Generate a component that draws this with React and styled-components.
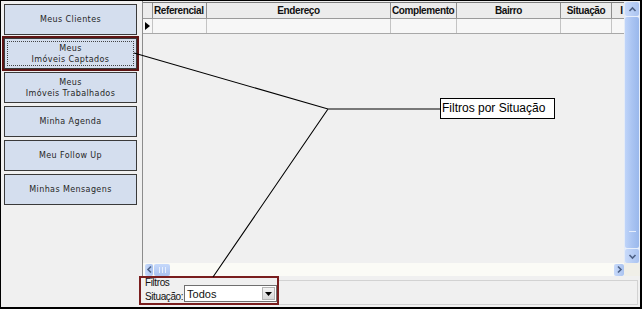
import React from 'react';
import styled, { createGlobalStyle } from 'styled-components';

const GlobalStyle = createGlobalStyle`
  body {
    margin: 0;
    background: #ffffff;
  }
`;

const Frame = styled.div`
  position: relative;
  width: 642px;
  height: 309px;
  box-sizing: border-box;
  border: 1px solid #000;
  border-right-width: 2px;
  border-bottom-width: 2px;
  background: #f0f0f0;
  display: flex;
  overflow: hidden;
  font-family: 'Liberation Sans', Arial, sans-serif;
`;

const SideMenu = styled.div`
  width: 138px;
  flex: none;
  box-sizing: border-box;
  padding: 3px 0 0 3px;
  display: flex;
  flex-direction: column;
  gap: 3px;
`;

const MenuButton = styled.div`
  width: 133px;
  height: 31px;
  box-sizing: border-box;
  background: #d4deee;
  border: 1px solid #3a3a3a;
  display: flex;
  align-items: center;
  justify-content: center;
  text-align: center;
  font-family: 'DejaVu Sans', Verdana, sans-serif;
  font-size: 8px;
  line-height: 11px;
  letter-spacing: 0.4px;
  color: #262626;
  outline: ${(p) => (p.$active ? '2px solid #5e1414' : 'none')};
  position: relative;
`;

const FocusRect = styled.div`
  position: absolute;
  inset: 2px;
  border: 1px dotted #444;
`;

const MainColumn = styled.div`
  flex: 1;
  display: flex;
  flex-direction: column;
  min-width: 0;
`;

const GridWrap = styled.div`
  margin-left: 3px;
  height: 262px;
  border-left: 1px solid #8c8c8c;
  display: flex;
  flex-direction: column;
`;

const GridBody = styled.div`
  flex: 1;
  display: flex;
  padding-top: 1px;
  min-height: 0;
`;

const Table = styled.div`
  flex: 1;
  min-width: 0;
  overflow: hidden;
  display: flex;
  flex-direction: column;
`;

const HeaderRow = styled.div`
  display: flex;
  height: 15px;
  border-top: 1px solid #7d7d7d;
  border-bottom: 1px solid #9a9a9a;
  background: #ececec;
  white-space: nowrap;
`;

const DataRow = styled.div`
  display: flex;
  height: 14px;
  border-bottom: 1px solid #a8a8a8;
  background: #f7f7f7;
`;

const Cell = styled.div`
  flex: none;
  width: ${(p) => p.$w}px;
  box-sizing: border-box;
  border-right: 1px solid ${(p) => (p.$head ? '#8f8f8f' : '#c4c4c4')};
  font-size: 10px;
  font-weight: bold;
  letter-spacing: -0.4px;
  line-height: 15px;
  color: #111;
  padding-left: ${(p) => (p.$left ? 1 : 0)}px;
  text-align: ${(p) => (p.$left ? 'left' : 'center')};
  overflow: hidden;
  position: relative;
`;

const RowMarker = styled.div`
  position: absolute;
  left: 2px;
  top: 3px;
  width: 0;
  height: 0;
  border-top: 4px solid transparent;
  border-bottom: 4px solid transparent;
  border-left: 5px solid #000;
`;

const VScroll = styled.div`
  width: 15px;
  flex: none;
  display: flex;
  flex-direction: column;
  gap: 1px;
  background: #e8effb;
  border-left: 1px solid #e4ebf7;
`;

const ScrollArrow = styled.div`
  width: ${(p) => p.$w || 14}px;
  height: ${(p) => p.$h || 14}px;
  flex: none;
  display: flex;
  align-items: center;
  justify-content: center;
  background: linear-gradient(90deg, #c8dafa, #aac3f0);
  border-radius: 2px;
`;

const VThumb = styled.div`
  flex: 1;
  width: 14px;
  border-radius: 2px;
  background: linear-gradient(90deg, #bfd4f9 0%, #aac4f2 50%, #9ab8ec 100%);
  display: flex;
  align-items: flex-end;
  justify-content: center;
  padding-bottom: 16px;
  box-sizing: border-box;
`;

const VGrip = styled.span`
  width: 7px;
  height: 1px;
  background: #e6eefc;
`;

const ScrollFill = styled.div`
  flex: 1;
`;

const HScrollRow = styled.div`
  height: 13px;
  display: flex;
  margin-left: 3px;
  border-left: 1px solid #8c8c8c;
`;

const HScroll = styled.div`
  flex: 1;
  display: flex;
  align-items: center;
  gap: 1px;
  padding-left: 2px;
  background: #fbfbf6;
`;

const HThumb = styled.div`
  width: 16px;
  height: 12px;
  background: linear-gradient(#c6d9fb, #a9c2f0);
  border-radius: 2px;
  display: flex;
  align-items: center;
  justify-content: center;
  gap: 2px;
`;

const Grip = styled.span`
  width: 1px;
  height: 6px;
  background: #e9f0fc;
`;

const Corner = styled.div`
  width: 16px;
  background: #f0efe8;
`;

const BottomBar = styled.div`
  flex: 1;
  display: flex;
  padding-bottom: 2px;
`;

const FilterBox = styled.div`
  width: 140px;
  height: 29px;
  box-sizing: border-box;
  border: 2px solid #7a1e1e;
  padding: 0 0 0 4px;
  display: flex;
  flex-direction: column;
  font-size: 10px;
  letter-spacing: -0.4px;
  color: #111;
`;

const FilterTitle = styled.div`
  line-height: 10px;
  height: 7px;
`;

const FilterLine = styled.div`
  display: flex;
  align-items: flex-end;
  gap: 1px;
  line-height: 12px;
`;

const SelectBox = styled.div`
  width: 93px;
  height: 17px;
  margin-bottom: 1px;
  box-sizing: border-box;
  border: 1px solid #6f6f6f;
  background: #fff;
  display: flex;
  align-items: center;
  justify-content: space-between;
  padding-left: 2px;
  font-size: 11px;
  letter-spacing: 0;
`;

const DropButton = styled.div`
  width: 13px;
  height: 13px;
  margin-right: 1px;
  background: linear-gradient(#f4f4f4, #d8d8d8);
  border: 1px solid #b5b5b5;
  box-sizing: border-box;
  display: flex;
  align-items: center;
  justify-content: center;
`;

const GroupRest = styled.div`
  flex: 1;
  margin-top: 4px;
  margin-right: 2px;
  border-top: 1px solid #d2d2d2;
  border-right: 1px solid #d2d2d2;
  border-bottom: 1px solid #d2d2d2;
`;

const CalloutLines = styled.svg`
  position: absolute;
  left: -1px;
  top: -1px;
  pointer-events: none;
`;

const Callout = styled.div`
  position: absolute;
  left: 439px;
  top: 97px;
  width: 115px;
  height: 21px;
  box-sizing: border-box;
  border: 1px solid #000;
  background: #fff;
  font-family: 'Liberation Sans', Arial, sans-serif;
  font-size: 12px;
  line-height: 19px;
  padding-left: 1px;
  color: #000;
  white-space: nowrap;
`;

const Chevron = ({ dir }) => {
  const paths = {
    up: 'M1.5 5 L4.5 2 L7.5 5',
    down: 'M1.5 2 L4.5 5 L7.5 2',
    left: 'M5 1.5 L2 4.5 L5 7.5',
    right: 'M2 1.5 L5 4.5 L2 7.5',
  };
  const vertical = dir === 'up' || dir === 'down';
  return (
    <svg width={vertical ? 9 : 7} height={vertical ? 7 : 9} viewBox={vertical ? '0 0 9 7' : '0 0 7 9'}>
      <path d={paths[dir]} fill="none" stroke="#4d6185" strokeWidth="1.6" />
    </svg>
  );
};

const menu = [
  ['Meus Clientes'],
  ['Meus', 'Imóveis Captados'],
  ['Meus', 'Imóveis Trabalhados'],
  ['Minha Agenda'],
  ['Meu Follow Up'],
  ['Minhas Mensagens'],
];

const columns = [
  { key: 'ind', w: 10 },
  { key: 'Referencial', w: 54, left: true },
  { key: 'Endereço', w: 184 },
  { key: 'Complemento', w: 66, left: true },
  { key: 'Bairro', w: 104 },
  { key: 'Situação', w: 51 },
  { key: 'I', w: 20 },
];

export default function App() {
  return (
    <>
      <GlobalStyle />
      <Frame>
        <SideMenu>
          {menu.map((lines, i) => (
            <MenuButton key={i} $active={i === 1}>
              {i === 1 && <FocusRect />}
              <div>
                {lines.map((l) => (
                  <div key={l}>{l}</div>
                ))}
              </div>
            </MenuButton>
          ))}
        </SideMenu>

        <MainColumn>
          <GridWrap>
            <GridBody>
              <Table>
                <HeaderRow>
                  {columns.map((c) => (
                    <Cell key={c.key} $w={c.w} $left={c.left} $head>
                      {c.key === 'ind' ? '' : c.key}
                    </Cell>
                  ))}
                </HeaderRow>
                <DataRow>
                  {columns.map((c) => (
                    <Cell key={c.key} $w={c.w}>
                      {c.key === 'ind' && <RowMarker />}
                    </Cell>
                  ))}
                </DataRow>
              </Table>
              <VScroll>
                <ScrollArrow>
                  <Chevron dir="up" />
                </ScrollArrow>
                <VThumb>
                  <VGrip />
                </VThumb>
                <ScrollArrow>
                  <Chevron dir="down" />
                </ScrollArrow>
              </VScroll>
            </GridBody>
          </GridWrap>
          <HScrollRow>
            <HScroll>
              <ScrollArrow $w={8} $h={12}>
                <Chevron dir="left" />
              </ScrollArrow>
              <HThumb>
                <Grip />
                <Grip />
                <Grip />
              </HThumb>
              <ScrollFill />
              <ScrollArrow $w={10} $h={12}>
                <Chevron dir="right" />
              </ScrollArrow>
            </HScroll>
            <Corner />
          </HScrollRow>
          <BottomBar>
            <FilterBox>
              <FilterTitle>Filtros</FilterTitle>
              <FilterLine>
                <span>Situação:</span>
                <SelectBox>
                  Todos
                  <DropButton>
                    <svg width="7" height="4" viewBox="0 0 7 4">
                      <path d="M0 0 H7 L3.5 4 Z" fill="#000" />
                    </svg>
                  </DropButton>
                </SelectBox>
              </FilterLine>
            </FilterBox>
            <GroupRest />
          </BottomBar>
        </MainColumn>

        <CalloutLines width="642" height="309" viewBox="0 0 642 309">
          <path
            d="M134 53 L328 109 L440 109 M328 109 L213 277"
            fill="none"
            stroke="#000"
            strokeWidth="1.1"
          />
        </CalloutLines>
        <Callout>Filtros por Situação</Callout>
      </Frame>
    </>
  );
}
